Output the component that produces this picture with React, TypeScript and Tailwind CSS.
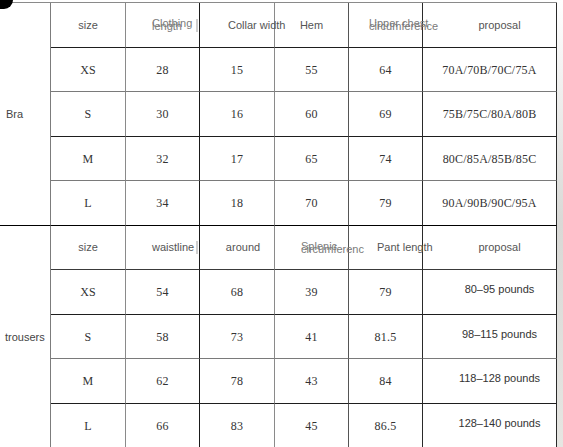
import type { ReactNode } from 'react';

const sans = 'font-["Liberation_Sans",Arial,sans-serif]';
const serif = 'font-["Liberation_Serif","Times_New_Roman",serif]';

// right border colour per column, bottom border colour per row
const colBorder = [
  'border-r-[#7c7c7c]',
  'border-r-[#8a8a8a]',
  'border-r-[#1a1a1a]',
  'border-r-[#8a8a8a]',
  'border-r-[#555555]',
  'border-r-[#2a2a2a]',
  'border-r-[#2a2a2a]',
];
const rowBorder = [
  'border-b-[#1e1e1e]',
  'border-b-[#7a7a7a]',
  'border-b-[#1e1e1e]',
  'border-b-[#7a7a7a]',
  'border-b-[#000000]',
  'border-b-[#3a3a3a]',
  'border-b-[#1e1e1e]',
  'border-b-[#7a7a7a]',
  'border-b-[#1e1e1e]',
  'border-b-transparent',
];

interface CellProps {
  row: number;
  col: number;
  children?: ReactNode;
  className?: string;
}

function Cell({ row, col, children, className = '' }: CellProps) {
  return (
    <div
      className={`flex items-center justify-center border-r border-b ${colBorder[col]} ${rowBorder[row]} ${className}`}
    >
      {children}
    </div>
  );
}

function Head({ children }: { children: ReactNode }) {
  return <span className={`${sans} text-[11px] whitespace-nowrap text-[#555]`}>{children}</span>;
}

function Stacked({ top, bottom }: { top: string; bottom: string }) {
  return (
    <span className={`${sans} flex flex-col text-[11px] leading-[3px] whitespace-nowrap text-[#7a7a7a]`}>
      <span>{top}</span>
      <span>{bottom}</span>
    </span>
  );
}

// the little grey caret marks left over at some header cell edges
function Mark() {
  return <span className="mr-[1px] ml-auto h-[13px] w-[2px] bg-[#cfcfcf]" />;
}

function Num({ children }: { children: ReactNode }) {
  return <span className={`${serif} text-[12px] tracking-[0.2px] text-[#333]`}>{children}</span>;
}

const braRows = [
  ['XS', '28', '15', '55', '64', '70A/70B/70C/75A'],
  ['S', '30', '16', '60', '69', '75B/75C/80A/80B'],
  ['M', '32', '17', '65', '74', '80C/85A/85B/85C'],
  ['L', '34', '18', '70', '79', '90A/90B/90C/95A'],
];

const trouserRows = [
  ['XS', '54', '68', '39', '79', '80–95 pounds'],
  ['S', '58', '73', '41', '81.5', '98–115 pounds'],
  ['M', '62', '78', '43', '84', '118–128 pounds'],
  ['L', '66', '83', '45', '86.5', '128–140 pounds'],
];

export default function App() {
  return (
    <div className="relative flex h-[447px] w-[563px] overflow-hidden bg-white">
      <div className="mt-[2px] grid h-max grid-cols-[51px_75px_74px_75px_74px_74px_134px] grid-rows-[45px_44px_45px_44px_45px_44px_45px_44px_45px_45px] border-t border-t-[#8a8a8a]">
        {/* Bra section */}
        <div className={`row-span-5 flex items-center border-r border-b pl-[6px] ${colBorder[0]} border-b-black`}>
          <span className={`${sans} text-[11px] text-[#444]`}>Bra</span>
        </div>
        <Cell row={0} col={1}>
          <Head>size</Head>
        </Cell>
        <Cell row={0} col={2} className="justify-start pl-[26px]">
          <Stacked top="Clothing" bottom="length" />
          <Mark />
        </Cell>
        <Cell row={0} col={3} className="justify-start pl-[28px]">
          <Head>Collar width</Head>
        </Cell>
        <Cell row={0} col={4}>
          <Head>Hem</Head>
        </Cell>
        <Cell row={0} col={5} className="justify-start pl-[20px]">
          <Stacked top="Upper chest" bottom="circumference" />
        </Cell>
        <Cell row={0} col={6} className="pl-[20px]">
          <Head>proposal</Head>
        </Cell>
        {braRows.map((r, i) =>
          r.map((v, j) => (
            <Cell key={`b${i}${j}`} row={i + 1} col={j + 1}>
              <Num>{v}</Num>
            </Cell>
          )),
        )}

        {/* trousers section */}
        <div className={`row-span-5 flex items-center border-r pl-[5px] ${colBorder[0]}`}>
          <span className={`${sans} text-[11px] text-[#444]`}>trousers</span>
        </div>
        <Cell row={5} col={1}>
          <Head>size</Head>
        </Cell>
        <Cell row={5} col={2} className="justify-start pl-[26px]">
          <Head>waistline</Head>
          <Mark />
        </Cell>
        <Cell row={5} col={3} className="pl-[12px]">
          <Head>around</Head>
        </Cell>
        <Cell row={5} col={4} className="justify-start pl-[26px]">
          <Stacked top="Splenic" bottom="circumferenc" />
        </Cell>
        <Cell row={5} col={5} className="justify-start pl-[28px]">
          <Head>Pant length</Head>
        </Cell>
        <Cell row={5} col={6} className="pl-[20px]">
          <Head>proposal</Head>
        </Cell>
        {trouserRows.map((r, i) =>
          r.map((v, j) => (
            <Cell key={`t${i}${j}`} row={i + 6} col={j + 1} className={j === 5 ? 'pl-[20px] pb-[5px]' : ''}>
              {j === 5 ? <span className={`${sans} text-[11px] text-[#333]`}>{v}</span> : <Num>{v}</Num>}
            </Cell>
          )),
        )}
      </div>

      {/* marble edge of the photo */}
      <div className="h-full w-[6px] bg-gradient-to-b from-white via-[#d9d9d6] to-[#e6e6e2]" />

      {/* dark blob in the corner */}
      <div className="absolute top-0 left-0 h-[9px] w-[13px] rounded-br-full bg-black" />
    </div>
  );
}
